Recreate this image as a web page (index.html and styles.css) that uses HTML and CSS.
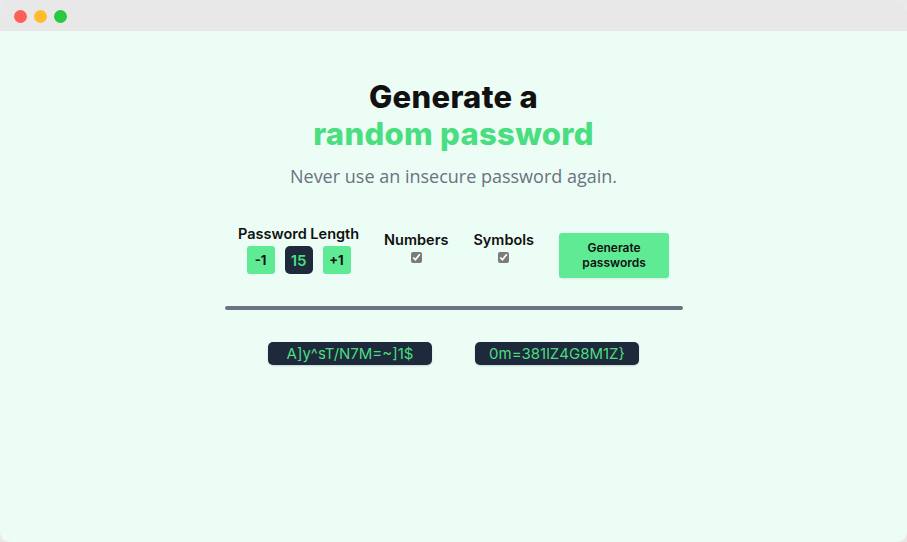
FILE: index.html
```html
<!DOCTYPE html>
<html>
<head>
<meta charset="utf-8">
<link rel="stylesheet" href="styles.css">
</head>
<body>
<div class="window">
  <div class="titlebar">
    <span class="dot red"></span>
    <span class="dot yellow"></span>
    <span class="dot green"></span>
  </div>
  <main class="content">
    <h1 class="title">Generate a<br><span class="accent">random password</span></h1>
    <p class="subtitle">Never use an insecure password again.</p>
    <div class="controls">
      <div class="group length">
        <div class="label">Password Length</div>
        <div class="stepper">
          <button class="step">-1</button>
          <span class="count">15</span>
          <button class="step">+1</button>
        </div>
      </div>
      <div class="group option">
        <div class="label">Numbers</div>
        <input type="checkbox" class="check" checked>
      </div>
      <div class="group option">
        <div class="label">Symbols</div>
        <input type="checkbox" class="check" checked>
      </div>
      <button class="generate">Generate<br>passwords</button>
    </div>
    <div class="divider"></div>
    <div class="results">
      <div class="pw">A]y^sT/N7M=~]1$</div>
      <div class="pw">0m=381lZ4G8M1Z}</div>
    </div>
  </main>
</div>
</body>
</html>
```
FILE: styles.css
```css
* { box-sizing: border-box; }
html, body { margin: 0; padding: 0; }
body {
  width: 907px;
  height: 542px;
  background: #e9e9e9;
  font-family: Inter, "Liberation Sans", sans-serif;
  overflow: hidden;
}
.window {
  width: 907px;
  height: 542px;
  border-radius: 10px;
  overflow: hidden;
  background: #ecfdf5;
  display: flex;
  flex-direction: column;
}
.titlebar {
  height: 31px;
  background: #e8e8e8;
  display: flex;
  align-items: center;
  gap: 7px;
  padding-left: 14px;
  padding-top: 2px;
}
.dot {
  width: 13px;
  height: 13px;
  border-radius: 50%;
  display: block;
}
.red { background: #fe5f57; }
.yellow { background: #febc2e; }
.green { background: #28c840; }
.content {
  flex: 1;
  display: flex;
  flex-direction: column;
  align-items: center;
}
.title {
  margin: 47px 0 0;
  font-size: 31px;
  line-height: 37px;
  font-weight: 800;
  text-align: center;
  color: #111111;
  letter-spacing: 0.3px;
}
.accent { color: #4ade80; }
.subtitle {
  margin: 12px 0 0;
  font-family: "Open Sans", sans-serif;
  font-size: 18px;
  line-height: 24px;
  color: #6b7280;
}
.controls {
  margin-top: 37px;
  display: flex;
  align-items: flex-start;
  gap: 25px;
}
.group {
  display: flex;
  flex-direction: column;
  align-items: center;
}
.label {
  font-size: 14.5px;
  font-weight: 600;
  color: #111111;
  line-height: 18px;
}
.stepper {
  display: flex;
  gap: 10px;
  margin-top: 3px;
}
.step, .count {
  width: 28px;
  height: 28px;
  border: none;
  border-radius: 3px;
  display: flex;
  align-items: center;
  justify-content: center;
  font-family: Inter, sans-serif;
  font-size: 13px;
  font-weight: 700;
  padding: 0;
}
.step { background: #5eeb94; color: #111; }
.count {
  background: #1e293b;
  color: #4ade80;
  font-size: 15px;
  font-weight: 600;
  border-radius: 5px;
}
.option { margin-top: 6px; }
.check {
  width: 11px;
  height: 11px;
  margin: 3px 0 0;
  accent-color: #7b7b7b;
}
.generate {
  margin-top: 8px;
  width: 110px;
  height: 45px;
  border: none;
  border-radius: 3px;
  background: #5eeb94;
  color: #111;
  font-family: Inter, sans-serif;
  font-size: 12px;
  font-weight: 600;
  line-height: 15px;
  padding: 0 0 2px;
  box-shadow: 0 1px 2px rgba(0,0,0,0.08);
}
.divider {
  margin-top: 28px;
  width: 458px;
  height: 4px;
  border-radius: 2px;
  background: #6b7280;
}
.results {
  margin-top: 32px;
  display: flex;
  gap: 43px;
}
.pw {
  width: 164px;
  height: 23px;
  border-radius: 5px;
  background: #1e293b;
  color: #4ade80;
  font-size: 15px;
  line-height: 23px;
  text-align: center;
  box-shadow: 0 1px 2px rgba(0,0,0,0.15);
}
```
